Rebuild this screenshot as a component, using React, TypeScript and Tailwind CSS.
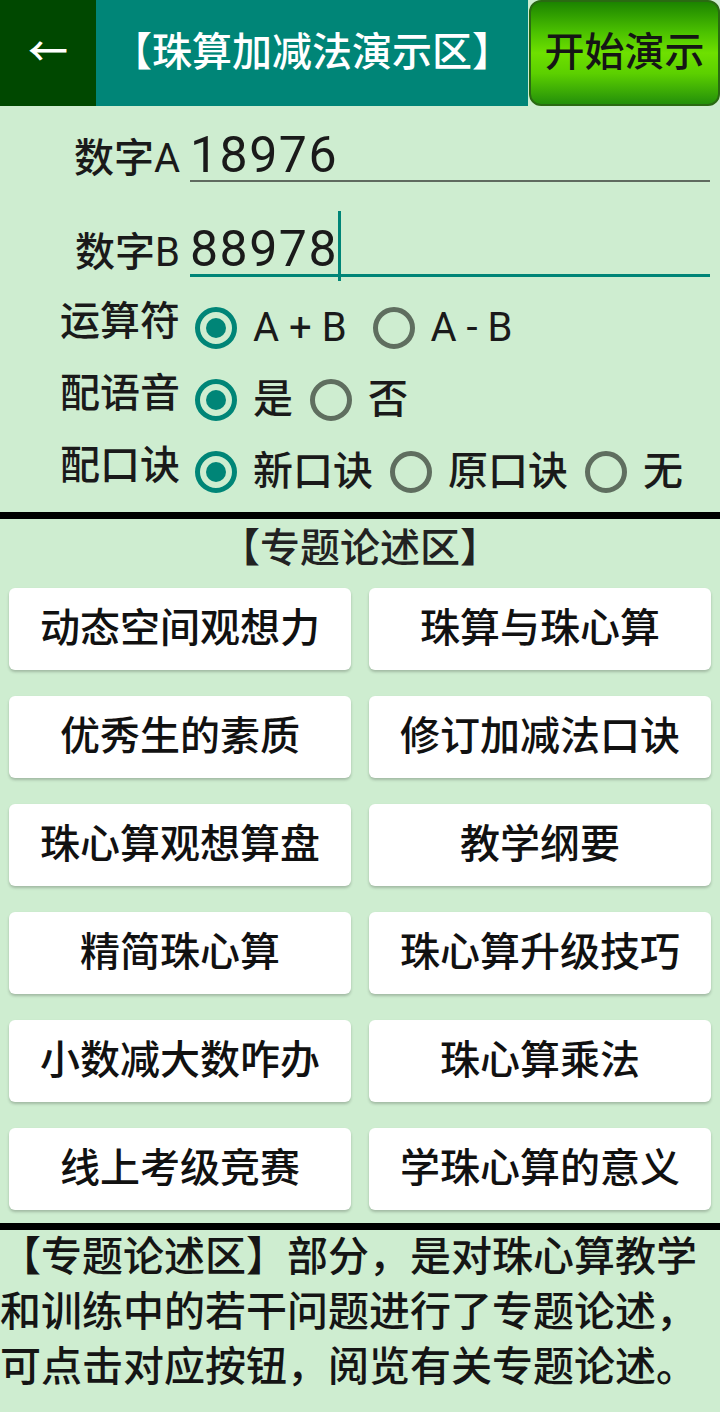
import React from 'react';

type Opt = { label: string; checked?: boolean; extra?: boolean; latin?: boolean };

const Radio: React.FC<{ checked?: boolean }> = ({ checked }) => (
  <div
    className={`w-[42px] h-[42px] rounded-full border-[5px] flex items-center justify-center shrink-0 ${
      checked ? 'border-[#008577]' : 'border-[#5f6e5f]'
    }`}
  >
    {checked && <div className="w-[20px] h-[20px] rounded-full bg-[#008577]" />}
  </div>
);

const RadioRow: React.FC<{ title: string; options: Opt[]; last?: boolean }> = ({ title, options, last }) => (
  <div className={`flex items-start ${last ? 'h-[63px]' : 'h-[72px]'}`}>
    <div className="w-[180px] text-right leading-[34px] text-[40px] text-[#1a1a1a]">{title}</div>
    <div className="flex items-center h-[46px] ml-[15px]">
      {options.map((o, i) => (
        <div key={i} className={`flex items-center ${i > 0 ? 'ml-[17px]' : ''} ${o.extra ? 'mr-[9px]' : ''}`}>
          <Radio checked={o.checked} />
          <span className={`ml-[16px] text-[40px] leading-[44px] text-[#1a1a1a] ${o.latin ? 'font-normal' : ''}`}>
            {o.label}
          </span>
        </div>
      ))}
    </div>
  </div>
);

const topics = [
  '动态空间观想力',
  '珠算与珠心算',
  '优秀生的素质',
  '修订加减法口诀',
  '珠心算观想算盘',
  '教学纲要',
  '精简珠心算',
  '珠心算升级技巧',
  '小数减大数咋办',
  '珠心算乘法',
  '线上考级竞赛',
  '学珠心算的意义',
];

export default function App() {
  return (
    <div className="w-[720px] min-h-[1412px] bg-[#ceedd0] font-[Roboto,'Noto_Sans_CJK_SC',sans-serif] font-medium overflow-hidden">
      {/* Header */}
      <div className="flex h-[106px]">
        <div className="w-[96px] bg-[#004800] flex items-center justify-center text-white text-[40px] leading-none">
          ←
        </div>
        <div className="w-[432px] bg-[#008577] flex items-center justify-center text-white text-[40px] leading-none">
          【珠算加减法演示区】
        </div>
        <div className="flex-1 pl-[1px]">
          <button className="w-full h-full rounded-[12px] border-2 border-[#2a6a12] bg-[linear-gradient(to_bottom,#1c8400,#4cc200_30%,#6ee000_50%,#5cd000_70%,#24900a)] text-[40px] leading-none text-[#151515] flex items-center justify-center">
            开始演示
          </button>
        </div>
      </div>

      {/* Inputs */}
      <div className="pt-[24px]">
        <div className="flex items-baseline">
          <div className="w-[180px] text-right text-[40px] leading-[52px] text-[#1a1a1a]">
            数字<span className="font-normal">A</span>
          </div>
          <div className="ml-[10px] mr-[10px] flex-1 border-b-2 border-[#5f6a5f] text-[50px] leading-[50px] tracking-[1.5px] font-normal text-[#1a1a1a]">
            18976
          </div>
        </div>
        <div className="flex items-baseline mt-[39px]">
          <div className="w-[180px] text-right text-[40px] leading-[52px] text-[#1a1a1a]">
            数字<span className="font-normal">B</span>
          </div>
          <div className="ml-[10px] mr-[10px] flex-1 border-b-[3px] border-[#008577] text-[50px] leading-[50px] tracking-[1.5px] font-normal text-[#1a1a1a]">
            <span className="relative inline-block">
              88978
              <span className="absolute right-[-3px] top-[-13px] w-[3px] h-[70px] bg-[#008577]" />
            </span>
          </div>
        </div>
      </div>

      {/* Radios */}
      <div className="mt-[26px]">
        <RadioRow
          title="运算符"
          options={[
            { label: 'A + B', checked: true, extra: true, latin: true },
            { label: 'A - B', latin: true },
          ]}
        />
        <RadioRow title="配语音" options={[{ label: '是', checked: true }, { label: '否' }]} />
        <RadioRow
          title="配口诀"
          last
          options={[{ label: '新口诀', checked: true }, { label: '原口诀' }, { label: '无' }]}
        />
      </div>

      <div className="h-[7px] bg-black" />

      {/* Topics */}
      <div className="text-center text-[40px] leading-[60px] text-[#222]">【专题论述区】</div>
      <div className="mt-[9px] px-[9px] grid grid-cols-2 gap-x-[18px] gap-y-[26px]">
        {topics.map((t) => (
          <button
            key={t}
            className="h-[82px] bg-white rounded-[6px] shadow-[0_2px_3px_rgba(0,0,0,0.22)] flex items-center justify-center text-[40px] leading-none text-[#111]"
          >
            {t}
          </button>
        ))}
      </div>

      <div className="mt-[13px] h-[7px] bg-black" />

      <p className="text-[41px] leading-[55px] text-[#151515]">
        【专题论述区】部分，是对珠心算教学和训练中的若干问题进行了专题论述，可点击对应按钮，阅览有关专题论述。
      </p>
    </div>
  );
}
